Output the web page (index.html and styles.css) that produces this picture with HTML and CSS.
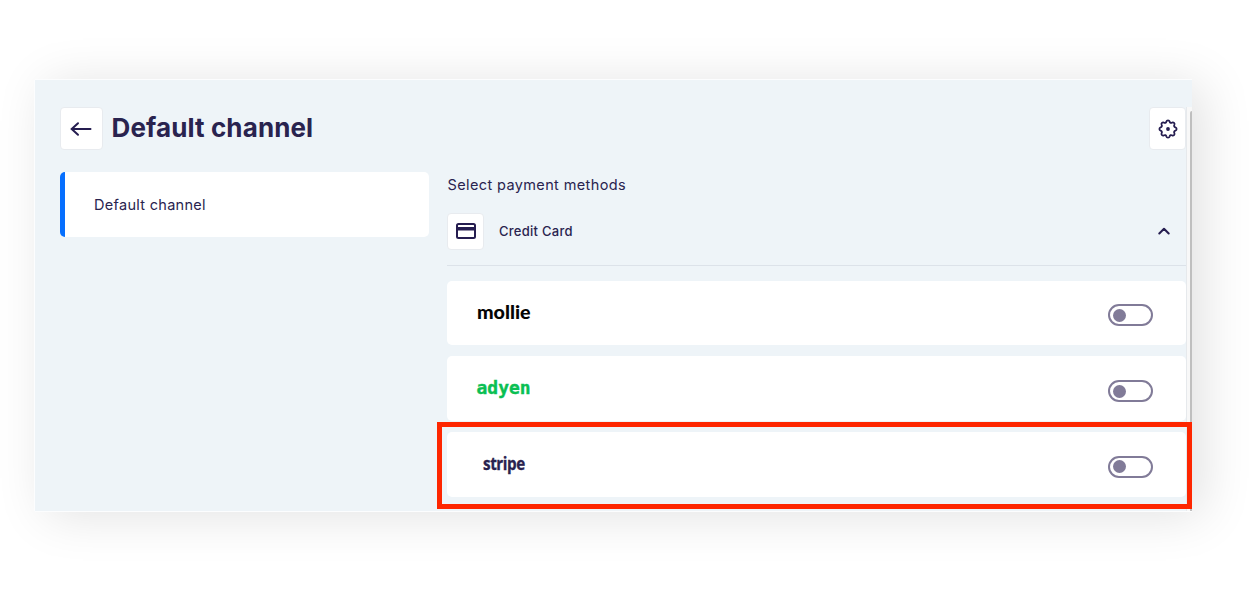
FILE: index.html
```
<!DOCTYPE html>
<html lang="en">
<head>
<meta charset="utf-8">
<title>Default channel</title>
<link rel="stylesheet" href="styles.css">
</head>
<body>
<main class="panel">
  <div class="content">
    <header class="header">
      <button class="icon-btn back" aria-label="Back">
        <svg width="22" height="16" viewBox="0 0 22 16"><path d="M20.500 8H1.500M8 2.200 1.700 8 8 13.800"/></svg>
      </button>
      <h1 class="title">Default channel</h1>
      <button class="icon-btn settings" aria-label="Settings">
        <svg width="20" height="20" viewBox="-10 -10 20 20"><path d="M-1.66-7.41A1.75 1.75 0 0 1 1.66-7.41A1.5 1.5 0 0 0 4.1-6.4A1.75 1.75 0 0 1 6.4-4.1A1.5 1.5 0 0 0 7.41-1.66A1.75 1.75 0 0 1 7.41 1.66A1.5 1.5 0 0 0 6.4 4.1A1.75 1.75 0 0 1 4.1 6.4A1.5 1.5 0 0 0 1.66 7.41A1.75 1.75 0 0 1-1.66 7.41A1.5 1.5 0 0 0-4.1 6.4A1.75 1.75 0 0 1-6.4 4.1A1.5 1.5 0 0 0-7.41 1.66A1.75 1.75 0 0 1-7.41-1.66A1.5 1.5 0 0 0-6.4-4.1A1.75 1.75 0 0 1-4.1-6.4A1.5 1.5 0 0 0-1.66-7.41Z"/><circle class="solid" r="1.9"/></svg>
      </button>
    </header>
    <div class="columns">
      <nav class="channels"><div class="channel">Default channel</div></nav>
      <section class="methods">
        <p class="label">Select payment methods</p>
        <div class="group">
          <span class="icon-btn card-icon">
            <svg width="20" height="16" viewBox="0 0 20 16"><rect x="1" y="1" width="18" height="14" rx="1.5"/><path class="solid" d="M1 4H19V7.500H1Z"/></svg>
          </span>
          <span class="group-name">Credit Card</span>
          <svg class="chevron" width="12" height="8" viewBox="0 0 12 8"><path d="M1.300 6.500 6 1.700l4.700 4.800"/></svg>
        </div>
        <div class="providers">
          <div class="provider"><span class="logo mollie">mollie</span><span class="toggle"></span></div>
          <div class="provider"><span class="logo adyen">adyen</span><span class="toggle"></span></div>
          <div class="provider"><span class="logo stripe">stripe</span><span class="toggle"></span></div>
        </div>
      </section>
    </div>
  </div>
  <div class="scrollbar"><div class="thumb"></div></div>
  <div class="highlight"></div>
</main>
</body>
</html>
```
FILE: styles.css
```
* { box-sizing: border-box; }
body { margin: 0; height: 600px; padding: 80px 58px 89px 35px; background: #fff; overflow: hidden; font-family: Inter, sans-serif; color: #29234f; }
.panel { position: relative; display: flex; height: 431px; background: #eef4f8; box-shadow: -1px 0 #fcfdfe, 0 -1px #fcfdfe, 0 1px #fcfdfe, 11px 4px 48px rgba(0, 0, 0, .12); }
.content { flex: 1; padding: 27px 0 0 24.500px; }
.header { display: flex; align-items: center; height: 43px; }
.icon-btn { display: flex; align-items: center; justify-content: center; flex: none; padding: 0; background: #fff; border: 1px solid #e8ebef; border-radius: 4px; }
.back { width: 43px; height: 43px; }
.settings { width: 37px; height: 43px; margin-left: auto; }
.card-icon { width: 37px; height: 37px; }
svg { display: block; fill: none; stroke: #251d50; stroke-width: 2; stroke-linecap: round; stroke-linejoin: round; }
.solid { fill: #251d50; stroke: none; }
.settings svg { stroke-width: 1.800; }
.title { margin: -2px 0 0 9px; font-size: 26px; line-height: 32px; font-weight: 700; letter-spacing: .12px; }
.columns { display: flex; gap: 18.500px; padding-top: 22px; }
.channels { width: 369px; }
.channel { display: flex; align-items: center; height: 65px; padding-left: 29.500px; background: #fff; border-left: 5px solid #066ffe; border-radius: 5px; font-size: 14.500px; letter-spacing: .3px; }
.methods { flex: 1; }
.label { margin: 2px 0 18px; padding-left: .5px; font-size: 14.500px; line-height: 22px; margin-bottom: 17px; letter-spacing: .38px; }
.group { display: flex; align-items: center; height: 52.500px; padding: 0 16px 15.500px 0; border-bottom: 1px solid #dce2e9; }
.group-name { margin-left: 15px; font-size: 13px; font-weight: 500; letter-spacing: .27px; margin-top: -1px; }
.chevron { margin-left: auto; }
.providers { display: grid; gap: 11px; padding-top: 15px; }
.provider { display: flex; align-items: center; justify-content: space-between; height: 64.800px; padding: 0 33px 0 29.500px; background: #fff; border-radius: 5px; }
.logo { transform-origin: left center; white-space: nowrap; margin-top: -2px; }
.mollie { color: #050505; font: 900 19.500px/24px Lato, sans-serif; transform: scaleX(1.01); }
.adyen { color: #0abf53; font: 700 18px/24px "DejaVu Sans Mono", monospace; -webkit-text-stroke: .4px #0abf53; }
.stripe { margin-left: 6px; font: 700 17.500px/24px "Open Sans", sans-serif; letter-spacing: -.5px; transform: scaleX(.87); -webkit-text-stroke: .3px #29234f; }
.toggle { display: flex; align-items: center; width: 45px; height: 22px; margin-top: 5px; padding-left: 3px; border: 2px solid #817b98; border-radius: 11px; }
.toggle::before { content: ""; width: 13px; height: 13px; border-radius: 50%; background: #817b98; }
.scrollbar { width: 6px; margin-top: 27px; padding: 4px 0 0 3px; background: #f8f8f8; border-left: 1px solid #e6e9ec; }
.thumb { height: 100%; background: #bfbfbf; border-radius: 2px 0 0 0; }
.highlight { position: absolute; left: 402px; top: 342px; width: 755px; height: 87px; border: 5px solid #fe2600; }
```
